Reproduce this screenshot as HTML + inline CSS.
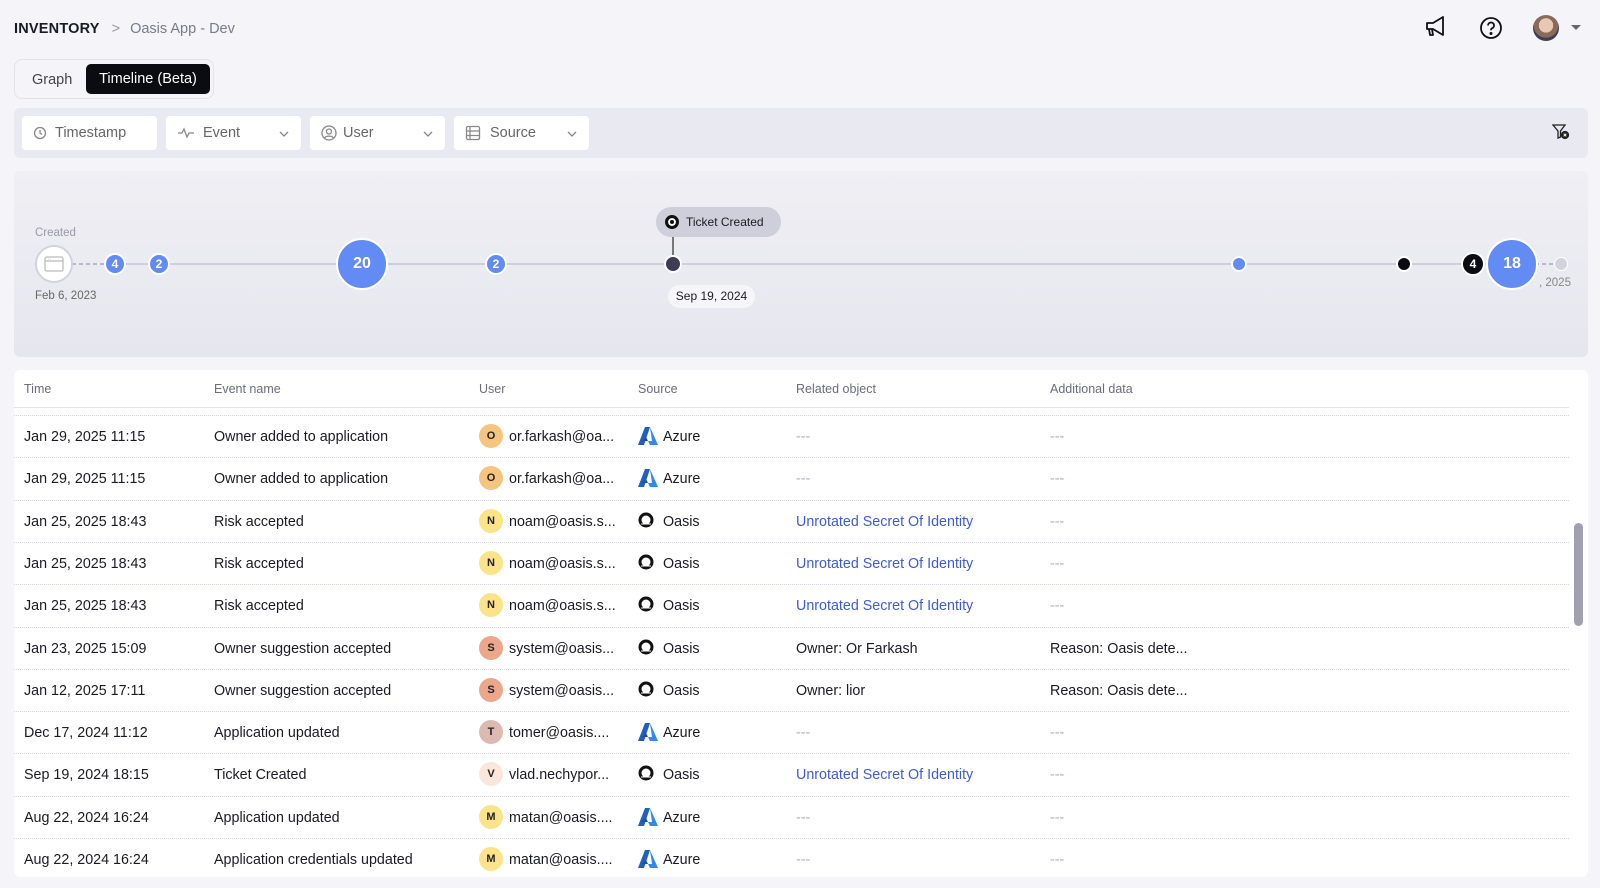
<!DOCTYPE html>
<html><head><meta charset="utf-8"><style>
*{box-sizing:border-box;margin:0;padding:0}
body{width:1600px;height:888px;overflow:hidden;background:#f4f4f9;font-family:"Liberation Sans",sans-serif;color:#1a1a22;position:relative}
.abs{position:absolute}
.bc{left:14px;top:21px;font-size:14.5px}
.bc b{font-weight:700;letter-spacing:.2px}
.bc span{color:#7a7a88;margin-left:10px}
.tabs{left:14px;top:59px;width:200px;height:40px;border:1px solid #e2e2ea;border-radius:8px;background:#f4f4f9}
.tabs .g{position:absolute;left:17px;top:12px;font-size:14.5px;color:#444}
.tabs .t{position:absolute;left:71px;top:4px;width:124px;height:30px;background:#0b0b12;color:#fff;border-radius:5px;font-size:14.5px;text-align:center;line-height:31px}
.fbar{left:14px;top:108px;width:1574px;height:50px;background:#e9e9f1;border-radius:6px}
.inp{position:absolute;top:8px;height:34px;background:#fff;border-radius:4px;font-size:14.5px;color:#666;line-height:35px}
.inp svg{position:absolute;left:11px;top:9px}
.inp .l{position:absolute;left:33px}
.inp .c{position:absolute;right:12px;top:14px}
.tl{left:14px;top:171px;width:1574px;height:186px;background:linear-gradient(#efeff4,#e6e6ef);border-radius:6px}
.line{position:absolute;top:92px;height:2px;background:#cfcfdc}
.node{position:absolute;border-radius:50%;color:#fff;text-align:center;font-weight:700;transform:translate(-50%,-50%);top:93px;border:2px solid #fff}
.tbl{left:14px;top:370px;width:1574px;height:507px;background:#fff;border-radius:6px;overflow:hidden}
.hd{position:absolute;top:12px;font-size:12.5px;color:#6b6b7a}
.hline{position:absolute;left:0;top:37px;width:1555px;height:1px;background:#e3e3ea}
.row{position:absolute;left:0;width:1555px;height:42.3px;border-top:1px dotted #d6d6e0;font-size:14.3px}
.row div{position:absolute;top:13px;white-space:nowrap}
.av{width:24px;height:24px;border-radius:50%;font-size:11px;font-weight:700;text-align:center;line-height:24px;top:8px!important;color:#222}
.lnk{color:#3d5bd6}
.dash{color:#b0b0bc}
</style></head><body>
<div class="abs bc"><b>INVENTORY</b> <span style="color:#999;margin-left:8px">&gt;</span><span>Oasis App - Dev</span></div>
<svg class="abs" style="left:1424px;top:15px" width="26" height="24" viewBox="0 0 26 24" fill="none" stroke="#111" stroke-width="1.8" stroke-linejoin="round"><path d="M3 8h6l10-6v18L9 14H3z"/><path d="M5 14l1 6h3l-1-6"/></svg>
<svg class="abs" style="left:1479px;top:16px" width="24" height="24" viewBox="0 0 24 24" fill="none" stroke="#111" stroke-width="1.8"><circle cx="12" cy="12" r="10"/><path d="M9 9.5a3 3 0 1 1 4 2.8c-.8.4-1 1-1 2"/><circle cx="12" cy="17.5" r=".6" fill="#111"/></svg>
<div class="abs" style="left:1533px;top:15px;width:26px;height:26px;border-radius:50%;background:radial-gradient(circle at 50% 40%,#e7c8b3 0 35%,#8a6b5a 36% 60%,#3c3f55 61%)"></div>
<div class="abs" style="left:1571px;top:25px;border:5px solid transparent;border-top:5px solid #666"></div>

<div class="abs tabs"><span class="g">Graph</span><span class="t">Timeline (Beta)</span></div>

<div class="abs fbar">
 <div class="inp" style="left:8px;width:135px"><svg width="14" height="16" viewBox="0 0 14 14" fill="none" stroke="#888" stroke-width="1.3"><circle cx="7" cy="7" r="5.5"/><path d="M7 4v3l2 1.5"/></svg><span class="l">Timestamp</span></div>
 <div class="inp" style="left:152px;width:135px"><svg width="18" height="16" viewBox="0 0 18 14" fill="none" stroke="#888" stroke-width="1.3"><path d="M1 7h4l2-4 3 8 2-4h5"/></svg><span class="l" style="left:37px">Event</span><svg class="c" width="10" height="6" viewBox="0 0 10 6" fill="none" stroke="#888" stroke-width="1.3" style="left:auto;top:15px"><path d="M1 1l4 4 4-4"/></svg></div>
 <div class="inp" style="left:296px;width:135px"><svg width="16" height="16" viewBox="0 0 16 16" fill="none" stroke="#888" stroke-width="1.3"><circle cx="8" cy="8" r="7"/><circle cx="8" cy="6.5" r="2.5"/><path d="M3.5 13c1.5-2.5 7.5-2.5 9 0"/></svg><span class="l">User</span><svg class="c" width="10" height="6" viewBox="0 0 10 6" fill="none" stroke="#888" stroke-width="1.3" style="left:auto;top:15px"><path d="M1 1l4 4 4-4"/></svg></div>
 <div class="inp" style="left:440px;width:135px"><svg width="16" height="16" viewBox="0 0 16 16" fill="none" stroke="#888" stroke-width="1.3"><rect x="1.5" y="1.5" width="13" height="13" rx="1.5"/><path d="M1.5 6h13M1.5 10.5h13M5 1.5v13"/></svg><span class="l" style="left:36px">Source</span><svg class="c" width="10" height="6" viewBox="0 0 10 6" fill="none" stroke="#888" stroke-width="1.3" style="left:auto;top:15px"><path d="M1 1l4 4 4-4"/></svg></div>
 <svg style="position:absolute;right:18px;top:16px" width="18" height="16" viewBox="0 0 18 16" fill="none" stroke="#222" stroke-width="1.3"><path d="M1 1h12L8.5 7v6L6 14V7z"/><circle cx="13" cy="11" r="3.5" fill="#222"/><path d="M11.7 9.7l2.6 2.6M14.3 9.7l-2.6 2.6" stroke="#fff" stroke-width="1"/></svg>
</div>

<div class="abs tl">
 <div class="abs" style="left:21px;top:56px;font-size:11.5px;color:#9a9aa8">Created</div>
 <div class="abs" style="left:21px;top:119px;font-size:11.5px;color:#666">Feb 6, 2023</div>
 <div class="abs" style="left:1525px;top:106px;font-size:11.5px;color:#888">, 2025</div>
 <div class="line" style="left:58px;width:40px;background:repeating-linear-gradient(90deg,#b8b8c8 0 4px,transparent 4px 7px)"></div>
 <div class="line" style="left:100px;width:1380px"></div>
 <div class="line" style="left:1500px;width:45px;background:repeating-linear-gradient(90deg,#b8b8c8 0 4px,transparent 4px 7px)"></div>
 <div class="node" style="left:40px;width:38px;height:38px;background:#fff;border:2px solid #d3d3de"><svg width="22" height="22" viewBox="0 0 22 22" fill="none" stroke="#bbb" stroke-width="1.3" style="margin-top:7px"><rect x="2" y="3" width="18" height="14" rx="2"/><path d="M2 7h18M5 5h.5M7 5h.5"/></svg></div>
 <div class="node" style="left:101px;width:22px;height:22px;background:#628cf3;font-size:12px;line-height:18px">4</div>
 <div class="node" style="left:145px;width:22px;height:22px;background:#628cf3;font-size:12px;line-height:18px">2</div>
 <div class="node" style="left:348px;width:52px;height:52px;background:#628cf3;font-size:16px;line-height:48px">20</div>
 <div class="node" style="left:482px;width:22px;height:22px;background:#628cf3;font-size:12px;line-height:18px">2</div>
 <div class="abs" style="left:658px;top:65px;width:1.5px;height:28px;background:#777"></div>
 <div class="node" style="left:659px;width:18px;height:18px;background:#3d3d55"></div>
 <div class="abs" style="left:642px;top:36px;width:125px;height:30px;border-radius:15px;background:#cfcfdc;font-size:12px;line-height:30px;padding-left:30px">Ticket Created<span style="position:absolute;left:9px;top:8px;width:14px;height:14px;border-radius:50%;background:#111;border:3px solid #111;box-shadow:inset 0 0 0 2px #fff"></span></div>
 <div class="abs" style="left:654px;top:114px;width:87px;height:23px;border-radius:12px;background:#f6f6f9;font-size:12px;line-height:23px;text-align:center">Sep 19, 2024</div>
 <div class="node" style="left:1225px;width:16px;height:16px;background:#628cf3"></div>
 <div class="node" style="left:1390px;width:16px;height:16px;background:#0b0b14"></div>
 <div class="node" style="left:1459px;width:24px;height:24px;background:#0b0b14;font-size:12px;line-height:20px">4</div>
 <div class="node" style="left:1498px;width:52px;height:52px;background:#628cf3;font-size:16px;line-height:48px">18</div>
 <div class="node" style="left:1547px;width:14px;height:14px;background:#d3d3de;border-width:1px"></div>
</div>

<div class="abs tbl">
 <div class="hd" style="left:10px">Time</div><div class="hd" style="left:200px">Event name</div><div class="hd" style="left:465px">User</div><div class="hd" style="left:624px">Source</div><div class="hd" style="left:782px">Related object</div><div class="hd" style="left:1036px">Additional data</div>
 <div class="hline"></div>
<div id="rows"></div>
</div>
<div class="abs" style="left:1574px;top:523px;width:9px;height:103px;border-radius:5px;background:#a0a0b0"></div>

<script>
var az='<svg width="20" height="18" viewBox="0 0 20 18"><path d="M7 0h5L6 18H0z" fill="#1f5fbf"/><path d="M12 0l8 18h-8l-2-4h4z" fill="#2f8ae8"/><path d="M8 10l2 4H4z" fill="#1a4fa0"/></svg>';
var oa='<svg width="16" height="16" viewBox="0 0 16 16"><circle cx="8" cy="8" r="6" fill="none" stroke="#111" stroke-width="3"/><path d="M3 12l10 0" stroke="#fff" stroke-width="1"/></svg>';
var L='<span class="lnk">Unrotated Secret Of Identity</span>',D='<span class="dash">---</span>';
var r=[
["Jan 29, 2025 11:15","Owner added to application","O","#f5c47e","or.farkash@oa...",1,D,D],
["Jan 29, 2025 11:15","Owner added to application","O","#f5c47e","or.farkash@oa...",1,D,D],
["Jan 25, 2025 18:43","Risk accepted","N","#fbe38a","noam@oasis.s...",0,L,D],
["Jan 25, 2025 18:43","Risk accepted","N","#fbe38a","noam@oasis.s...",0,L,D],
["Jan 25, 2025 18:43","Risk accepted","N","#fbe38a","noam@oasis.s...",0,L,D],
["Jan 23, 2025 15:09","Owner suggestion accepted","S","#eba68c","system@oasis...",0,"Owner: Or Farkash","Reason: Oasis dete..."],
["Jan 12, 2025 17:11","Owner suggestion accepted","S","#eba68c","system@oasis...",0,"Owner: lior","Reason: Oasis dete..."],
["Dec 17, 2024 11:12","Application updated","T","#dcbab2","tomer@oasis....",1,D,D],
["Sep 19, 2024 18:15","Ticket Created","V","#fbe6dc","vlad.nechypor...",0,L,D],
["Aug 22, 2024 16:24","Application updated","M","#fbe38a","matan@oasis....",1,D,D],
["Aug 22, 2024 16:24","Application credentials updated","M","#fbe38a","matan@oasis....",1,D,D]];
var h='';
r.forEach(function(x,i){var t=45+i*42.3;
h+='<div class="row" style="top:'+t+'px"><div style="left:10px">'+x[0]+'</div><div style="left:200px">'+x[1]+'</div><div class="av" style="left:465px;background:'+x[3]+'">'+x[2]+'</div><div style="left:495px">'+x[4]+'</div><div style="left:624px;top:11px">'+(x[5]?az:oa)+'</div><div style="left:649px">'+(x[5]?'Azure':'Oasis')+'</div><div style="left:782px">'+x[6]+'</div><div style="left:1036px">'+x[7]+'</div></div>';});
document.getElementById('rows').innerHTML=h;
</script>
</body></html>
